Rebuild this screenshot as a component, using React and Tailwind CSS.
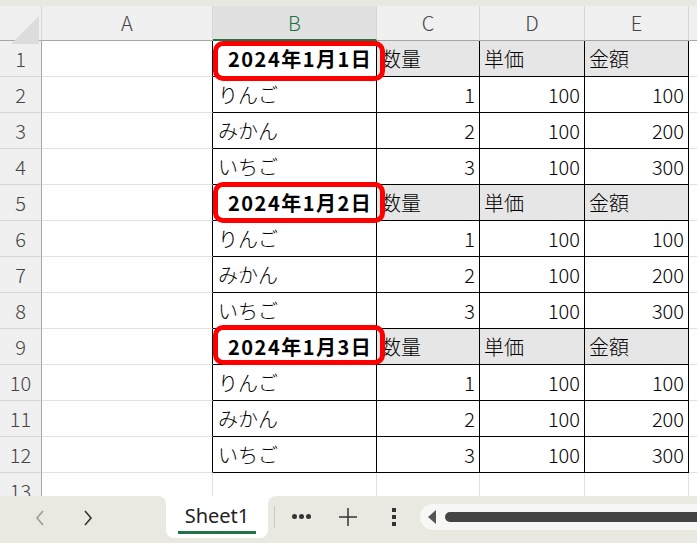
import React from "react";

const FONT = { fontFamily: '"Noto Sans CJK JP", "Noto Sans", sans-serif' };

const groups = [
  { date: "2024年1月1日", box: "top-0 h-[40px]" },
  { date: "2024年1月2日", box: "-top-[3px] h-[41px]" },
  { date: "2024年1月3日", box: "-top-[4px] h-[40px]" },
];
const items = [
  ["りんご", 1, 100, 100],
  ["みかん", 2, 100, 200],
  ["いちご", 3, 100, 300],
];

function RowHead({ n }) {
  return (
    <div className="w-[42px] shrink-0 h-full bg-[#f0f0f0] border-r border-r-[#a6a6a6] border-b border-b-[#d6d6d6] flex items-center justify-center text-[20px] font-light text-[#444]">
      {n}
    </div>
  );
}

function Row({ n, children }) {
  return (
    <div className="flex h-[36px]">
      <RowHead n={n} />
      <div className="w-[171px] shrink-0 h-full border-b border-b-[#e1e1e1] border-r border-r-black" />
      {children}
      <div className="flex-1 h-full border-b border-b-[#e1e1e1]" />
    </div>
  );
}

function HeaderRow({ n, date, box }) {
  return (
    <Row n={n}>
      <div className="relative w-[164px] shrink-0 h-full border-b border-r border-black bg-white flex items-center pl-[15px] text-[20px] tracking-[1.5px] font-bold text-black">
        {date}
        <div className={`absolute left-0 w-[172px] ${box} border-[5px] border-[#ff0000] rounded-[10px] z-10`} />
      </div>
      {[
        ["数量", "w-[103px]"],
        ["単価", "w-[105px]"],
        ["金額", "w-[104px]"],
      ].map(([t, w]) => (
        <div key={t} className={`${w} shrink-0 h-full border-b border-r border-black bg-[#e6e6e6] flex items-center pl-[4px] text-[20px] font-light text-black`}>
          {t}
        </div>
      ))}
    </Row>
  );
}

function DataRow({ n, item }) {
  const [name, q, p, a] = item;
  return (
    <Row n={n}>
      <div className="w-[164px] shrink-0 h-full border-b border-r border-black flex items-center pl-[5px] text-[20px] font-light text-black">
        {name}
      </div>
      <div className="w-[103px] shrink-0 h-full border-b border-r border-black flex items-center justify-end pr-[4px] text-[20px] font-light text-black">{q}</div>
      <div className="w-[105px] shrink-0 h-full border-b border-r border-black flex items-center justify-end pr-[4px] text-[20px] font-light text-black">{p}</div>
      <div className="w-[104px] shrink-0 h-full border-b border-r border-black flex items-center justify-end pr-[4px] text-[20px] font-light text-black">{a}</div>
    </Row>
  );
}

export default function App() {
  let n = 0;
  const rows = [];
  groups.forEach((g) => {
    n += 1;
    rows.push(<HeaderRow key={n} n={n} date={g.date} box={g.box} />);
    items.forEach((it) => {
      n += 1;
      rows.push(<DataRow key={n} n={n} item={it} />);
    });
  });

  return (
    <div className="w-[697px] h-[543px] overflow-hidden bg-white flex flex-col" style={FONT}>
      <div className="h-[6px] bg-[#e9e9e4] shrink-0" />
      {/* column headers */}
      <div className="flex h-[35px] shrink-0 text-[20px] font-light text-[#444]">
        <div className="relative w-[42px] shrink-0 bg-[#f0f0f0] border-r border-r-[#d6d6d6] border-b border-b-[#a6a6a6]">
          <svg className="absolute left-[11px] top-[10px]" width="29" height="29" viewBox="0 0 29 29">
            <polygon points="0,28 28,0 28,28" fill="#dcdcdc" />
          </svg>
        </div>
        <div className="w-[171px] shrink-0 bg-[#f0f0f0] border-r border-r-[#d6d6d6] border-b border-b-[#a6a6a6] flex items-center justify-center">A</div>
        <div className="w-[164px] shrink-0 bg-[#e1e1e1] border-r border-r-[#d6d6d6] border-b-2 border-b-[#217346] text-[#217346] flex items-center justify-center">B</div>
        <div className="w-[103px] shrink-0 bg-[#f0f0f0] border-r border-r-[#d6d6d6] border-b border-b-[#a6a6a6] flex items-center justify-center">C</div>
        <div className="w-[105px] shrink-0 bg-[#f0f0f0] border-r border-r-[#d6d6d6] border-b border-b-[#a6a6a6] flex items-center justify-center">D</div>
        <div className="w-[104px] shrink-0 bg-[#f0f0f0] border-r border-r-[#d6d6d6] border-b border-b-[#a6a6a6] flex items-center justify-center">E</div>
        <div className="flex-1 bg-[#f0f0f0] border-b border-b-[#a6a6a6]" />
      </div>
      <div className="flex flex-col shrink-0">{rows}</div>
      {/* row 13 partial */}
      <div className="flex h-[23px] shrink-0 overflow-hidden">
        <div className="w-[42px] shrink-0 h-[36px] bg-[#f0f0f0] border-r border-r-[#a6a6a6] flex items-center justify-center text-[20px] font-light text-[#444]">13</div>
        <div className="w-[171px] shrink-0 border-r border-r-[#e1e1e1]" />
        <div className="w-[164px] shrink-0 border-r border-r-[#e1e1e1]" />
        <div className="w-[103px] shrink-0 border-r border-r-[#e1e1e1]" />
        <div className="w-[105px] shrink-0 border-r border-r-[#e1e1e1]" />
        <div className="w-[104px] shrink-0 border-r border-r-[#e1e1e1]" />
        <div className="flex-1" />
      </div>
      {/* bottom tab bar */}
      <div className="flex h-[47px] shrink-0 bg-white">
        <div className="w-[166px] shrink-0 bg-[#e9e9e1] rounded-tr-[8px] flex items-center">
          <svg className="ml-[34px] -mt-[4px]" width="12" height="18" viewBox="0 0 12 18">
            <polyline points="9,2 3,9 9,16" fill="none" stroke="#9a9a9a" strokeWidth="1.6" />
          </svg>
          <svg className="ml-[36px] -mt-[4px]" width="12" height="18" viewBox="0 0 12 18">
            <polyline points="3,2 9,9 3,16" fill="none" stroke="#333" strokeWidth="1.6" />
          </svg>
        </div>
        <div className="w-[102px] shrink-0 bg-[#e9e9e1]">
          <div className="h-[42px] bg-white rounded-b-[8px] flex flex-col items-center pt-[6px]">
            <span className="text-[20px] text-[#222] leading-[28px]" style={{ fontFamily: '"Noto Sans", sans-serif' }}>Sheet1</span>
            <div className="w-[78px] h-[3px] bg-[#217346] mt-[1px]" />
          </div>
        </div>
        <div className="flex-1 bg-[#e9e9e1] rounded-tl-[8px] flex items-center relative">
          <div className="ml-[6px] w-px h-[22px] bg-[#c8c8c0] -mt-[6px]" />
          <div className="ml-[17px] flex gap-[2px] -mt-[6px]">
            <span className="w-[5px] h-[5px] rounded-full bg-[#333]" />
            <span className="w-[5px] h-[5px] rounded-full bg-[#333]" />
            <span className="w-[5px] h-[5px] rounded-full bg-[#333]" />
          </div>
          <svg className="ml-[28px] -mt-[6px]" width="18" height="18" viewBox="0 0 18 18">
            <line x1="9" y1="0" x2="9" y2="18" stroke="#333" strokeWidth="1.5" />
            <line x1="0" y1="9" x2="18" y2="9" stroke="#333" strokeWidth="1.5" />
          </svg>
          <div className="ml-[35px] flex flex-col gap-[3px] -mt-[6px]">
            <span className="w-[4px] h-[4px] bg-[#333]" />
            <span className="w-[4px] h-[4px] bg-[#333]" />
            <span className="w-[4px] h-[4px] bg-[#333]" />
          </div>
          <div className="ml-[24px] flex-1 h-[26px] bg-[#f7f7f5] rounded-l-full flex items-center -mt-[6px]">
            <svg className="ml-[7px]" width="10" height="14" viewBox="0 0 10 14">
              <polygon points="9,0 9,14 1,7" fill="#555" />
            </svg>
            <div className="ml-[8px] flex-1 h-[10px] bg-[#444] rounded-l-full" />
          </div>
        </div>
      </div>
    </div>
  );
}
